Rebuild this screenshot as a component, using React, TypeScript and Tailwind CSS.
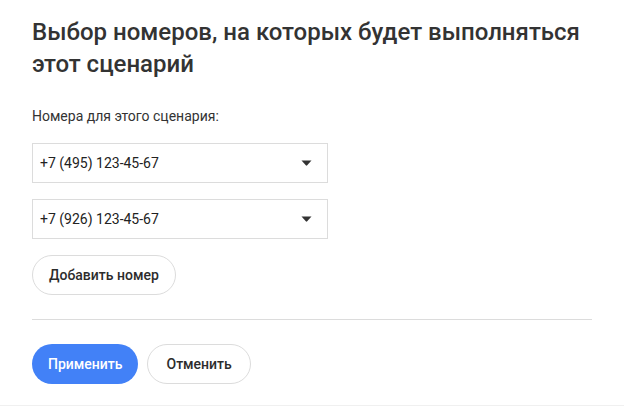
import React from "react";

function Caret() {
  return (
    <svg width="11" height="6" viewBox="0 0 11 6" className="shrink-0">
      <path d="M0.5 0.5 H10.5 L6.2 5.3 Q5.5 6 4.8 5.3 Z" fill="#333" />
    </svg>
  );
}

function Select({ value }: { value: string }) {
  return (
    <div className="flex h-[40px] w-[296px] items-center justify-between border border-[#dcdcdc] bg-white pl-[7px] pr-[15px]">
      <span className="text-[14px] text-[#222]">{value}</span>
      <Caret />
    </div>
  );
}

export default function App() {
  return (
    <div
      className="h-[406px] w-[624px] overflow-hidden border-b border-[#f0f0f0] bg-white px-[32px] text-[#2c2c2c]"
      style={{ fontFamily: "Roboto, 'Liberation Sans', sans-serif" }}
    >
      <h1 className="pt-[16px] text-[24px] font-medium leading-[32px] text-[#333]">
        Выбор номеров, на которых будет выполняться этот сценарий
      </h1>
      <div className="mt-[27px] text-[14px] leading-[18px] text-[#333]">Номера для этого сценария:</div>
      <div className="mt-[18px] flex flex-col gap-[16px]">
        <Select value="+7 (495) 123-45-67" />
        <Select value="+7 (926) 123-45-67" />
      </div>
      <button className="mt-[16px] flex h-[40px] items-center rounded-full border border-[#dcdcdc] bg-white px-[16px] text-[14px] font-medium text-[#2c2c2c]">
        Добавить номер
      </button>
      <div className="mt-[24px] h-px w-[560px] bg-[#dcdcdc]" />
      <div className="mt-[24px] flex gap-[9px]">
        <button className="flex h-[40px] items-center rounded-full bg-[#4281f7] px-[16px] text-[14px] font-medium text-white">
          Применить
        </button>
        <button className="flex h-[40px] items-center rounded-full border border-[#dcdcdc] bg-white px-[18px] text-[14px] font-medium text-[#2c2c2c]">
          Отменить
        </button>
      </div>
    </div>
  );
}
